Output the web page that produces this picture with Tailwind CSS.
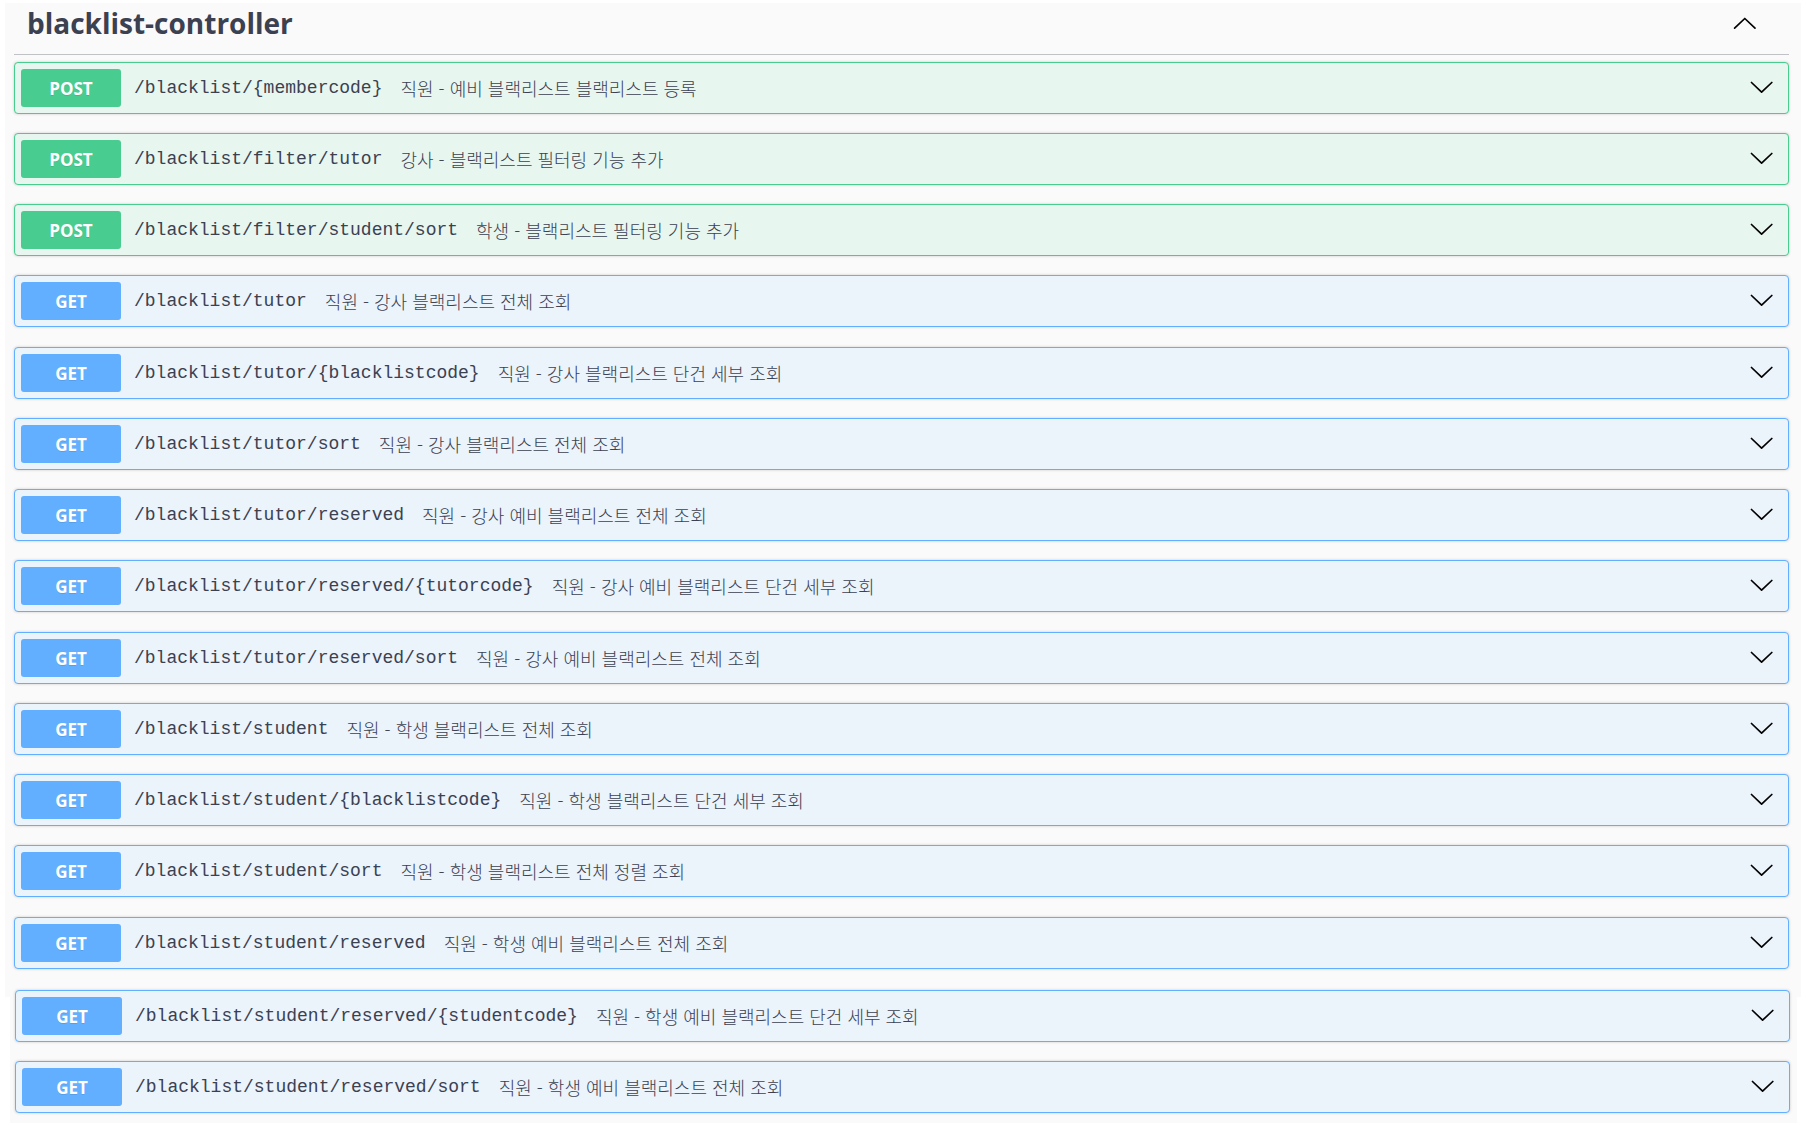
<!DOCTYPE html>
<html lang="ko">
<head>
<meta charset="utf-8">
<title>blacklist-controller</title>
<script src="https://cdn.jsdelivr.net/npm/@tailwindcss/browser@4"></script>
</head>
<body class="bg-white pt-[3px] font-['Open_Sans','Noto_Sans_CJK_KR',sans-serif] text-[#3b4151]">
<main>
  <section class="mx-[5px] bg-[#fafafa] pr-3 pb-7 pl-[9px]">
    <h1 class="mb-[7px] border-b border-[#3b4151]/30">
      <button type="button" aria-expanded="true" class="flex h-[51px] w-full items-start justify-between pr-8 pl-[13px] text-left text-[28px] leading-10 font-bold">
        <span>blacklist-controller</span>
        <svg class="mt-3 h-4 w-6" viewBox="0 0 24 16" fill="none" stroke="#000" stroke-width="1.7" stroke-linecap="round" stroke-linejoin="round" aria-hidden="true"><path d="M1.600 13.200 11.800 3.500 22 13.200"/></svg>
      </button>
    </h1>
    <ul id="operations"></ul>
  </section>
  <section class="mr-[9px] ml-[10px] flow-root bg-[#fafafa] pr-[7px] pb-2.5 pl-[5px]">
    <ul id="more-operations" class="-mt-[7px]"></ul>
  </section>
</main>
<script>
  const operations = [
    ["POST", "/blacklist/{membercode}", "직원 - 예비 블랙리스트 블랙리스트 등록"],
    ["POST", "/blacklist/filter/tutor", "강사 - 블랙리스트 필터링 기능 추가"],
    ["POST", "/blacklist/filter/student/sort", "학생 - 블랙리스트 필터링 기능 추가"],
    ["GET", "/blacklist/tutor", "직원 - 강사 블랙리스트 전체 조회"],
    ["GET", "/blacklist/tutor/{blacklistcode}", "직원 - 강사 블랙리스트 단건 세부 조회"],
    ["GET", "/blacklist/tutor/sort", "직원 - 강사 블랙리스트 전체 조회"],
    ["GET", "/blacklist/tutor/reserved", "직원 - 강사 예비 블랙리스트 전체 조회"],
    ["GET", "/blacklist/tutor/reserved/{tutorcode}", "직원 - 강사 예비 블랙리스트 단건 세부 조회"],
    ["GET", "/blacklist/tutor/reserved/sort", "직원 - 강사 예비 블랙리스트 전체 조회"],
    ["GET", "/blacklist/student", "직원 - 학생 블랙리스트 전체 조회"],
    ["GET", "/blacklist/student/{blacklistcode}", "직원 - 학생 블랙리스트 단건 세부 조회"],
    ["GET", "/blacklist/student/sort", "직원 - 학생 블랙리스트 전체 정렬 조회"],
    ["GET", "/blacklist/student/reserved", "직원 - 학생 예비 블랙리스트 전체 조회"],
  ];
  const moreOperations = [
    ["GET", "/blacklist/student/reserved/{studentcode}", "직원 - 학생 예비 블랙리스트 단건 세부 조회"],
    ["GET", "/blacklist/student/reserved/sort", "직원 - 학생 예비 블랙리스트 전체 조회"],
  ];
  const rowColors = {
    POST: "border-[#49cc90] bg-[#e8f6f0]",
    GET: "border-[#61affe] bg-[#ebf3fb]",
  };
  const badgeColors = { POST: "bg-[#49cc90]", GET: "bg-[#61affe]" };
  const row = ([method, path, summary]) => `
    <li class="mb-[19px] last:mb-0 nth-[4n]:mb-5">
      <button type="button" aria-expanded="false" class="flex h-[52px] w-full items-center rounded border pr-[15px] pl-1.5 text-left shadow-[0_0_3px_rgba(0,0,0,0.19)] ${rowColors[method]}">
        <span class="h-[38px] w-[100px] rounded-[3px] text-center text-[17px] leading-10 font-bold text-white text-shadow-[0_1px_0_rgba(0,0,0,0.1)] ${badgeColors[method]}">${method}</span>
        <span class="ml-[13px] font-['Liberation_Mono',monospace] text-lg leading-6">${path}</span>
        <span class="ml-[18px] flex-1 font-['Noto_Sans_CJK_KR',sans-serif] text-lg leading-6 font-light">${summary}</span>
        <svg class="h-4 w-6" viewBox="0 0 24 16" fill="none" stroke="#000" stroke-width="1.7" stroke-linecap="round" stroke-linejoin="round" aria-hidden="true"><path d="M2.500 2.500 12.600 12.200 22.800 2.500"/></svg>
      </button>
    </li>`;
  document.getElementById("operations").innerHTML = operations.map(row).join("");
  document.getElementById("more-operations").innerHTML = moreOperations.map(row).join("");
</script>
</body>
</html>
